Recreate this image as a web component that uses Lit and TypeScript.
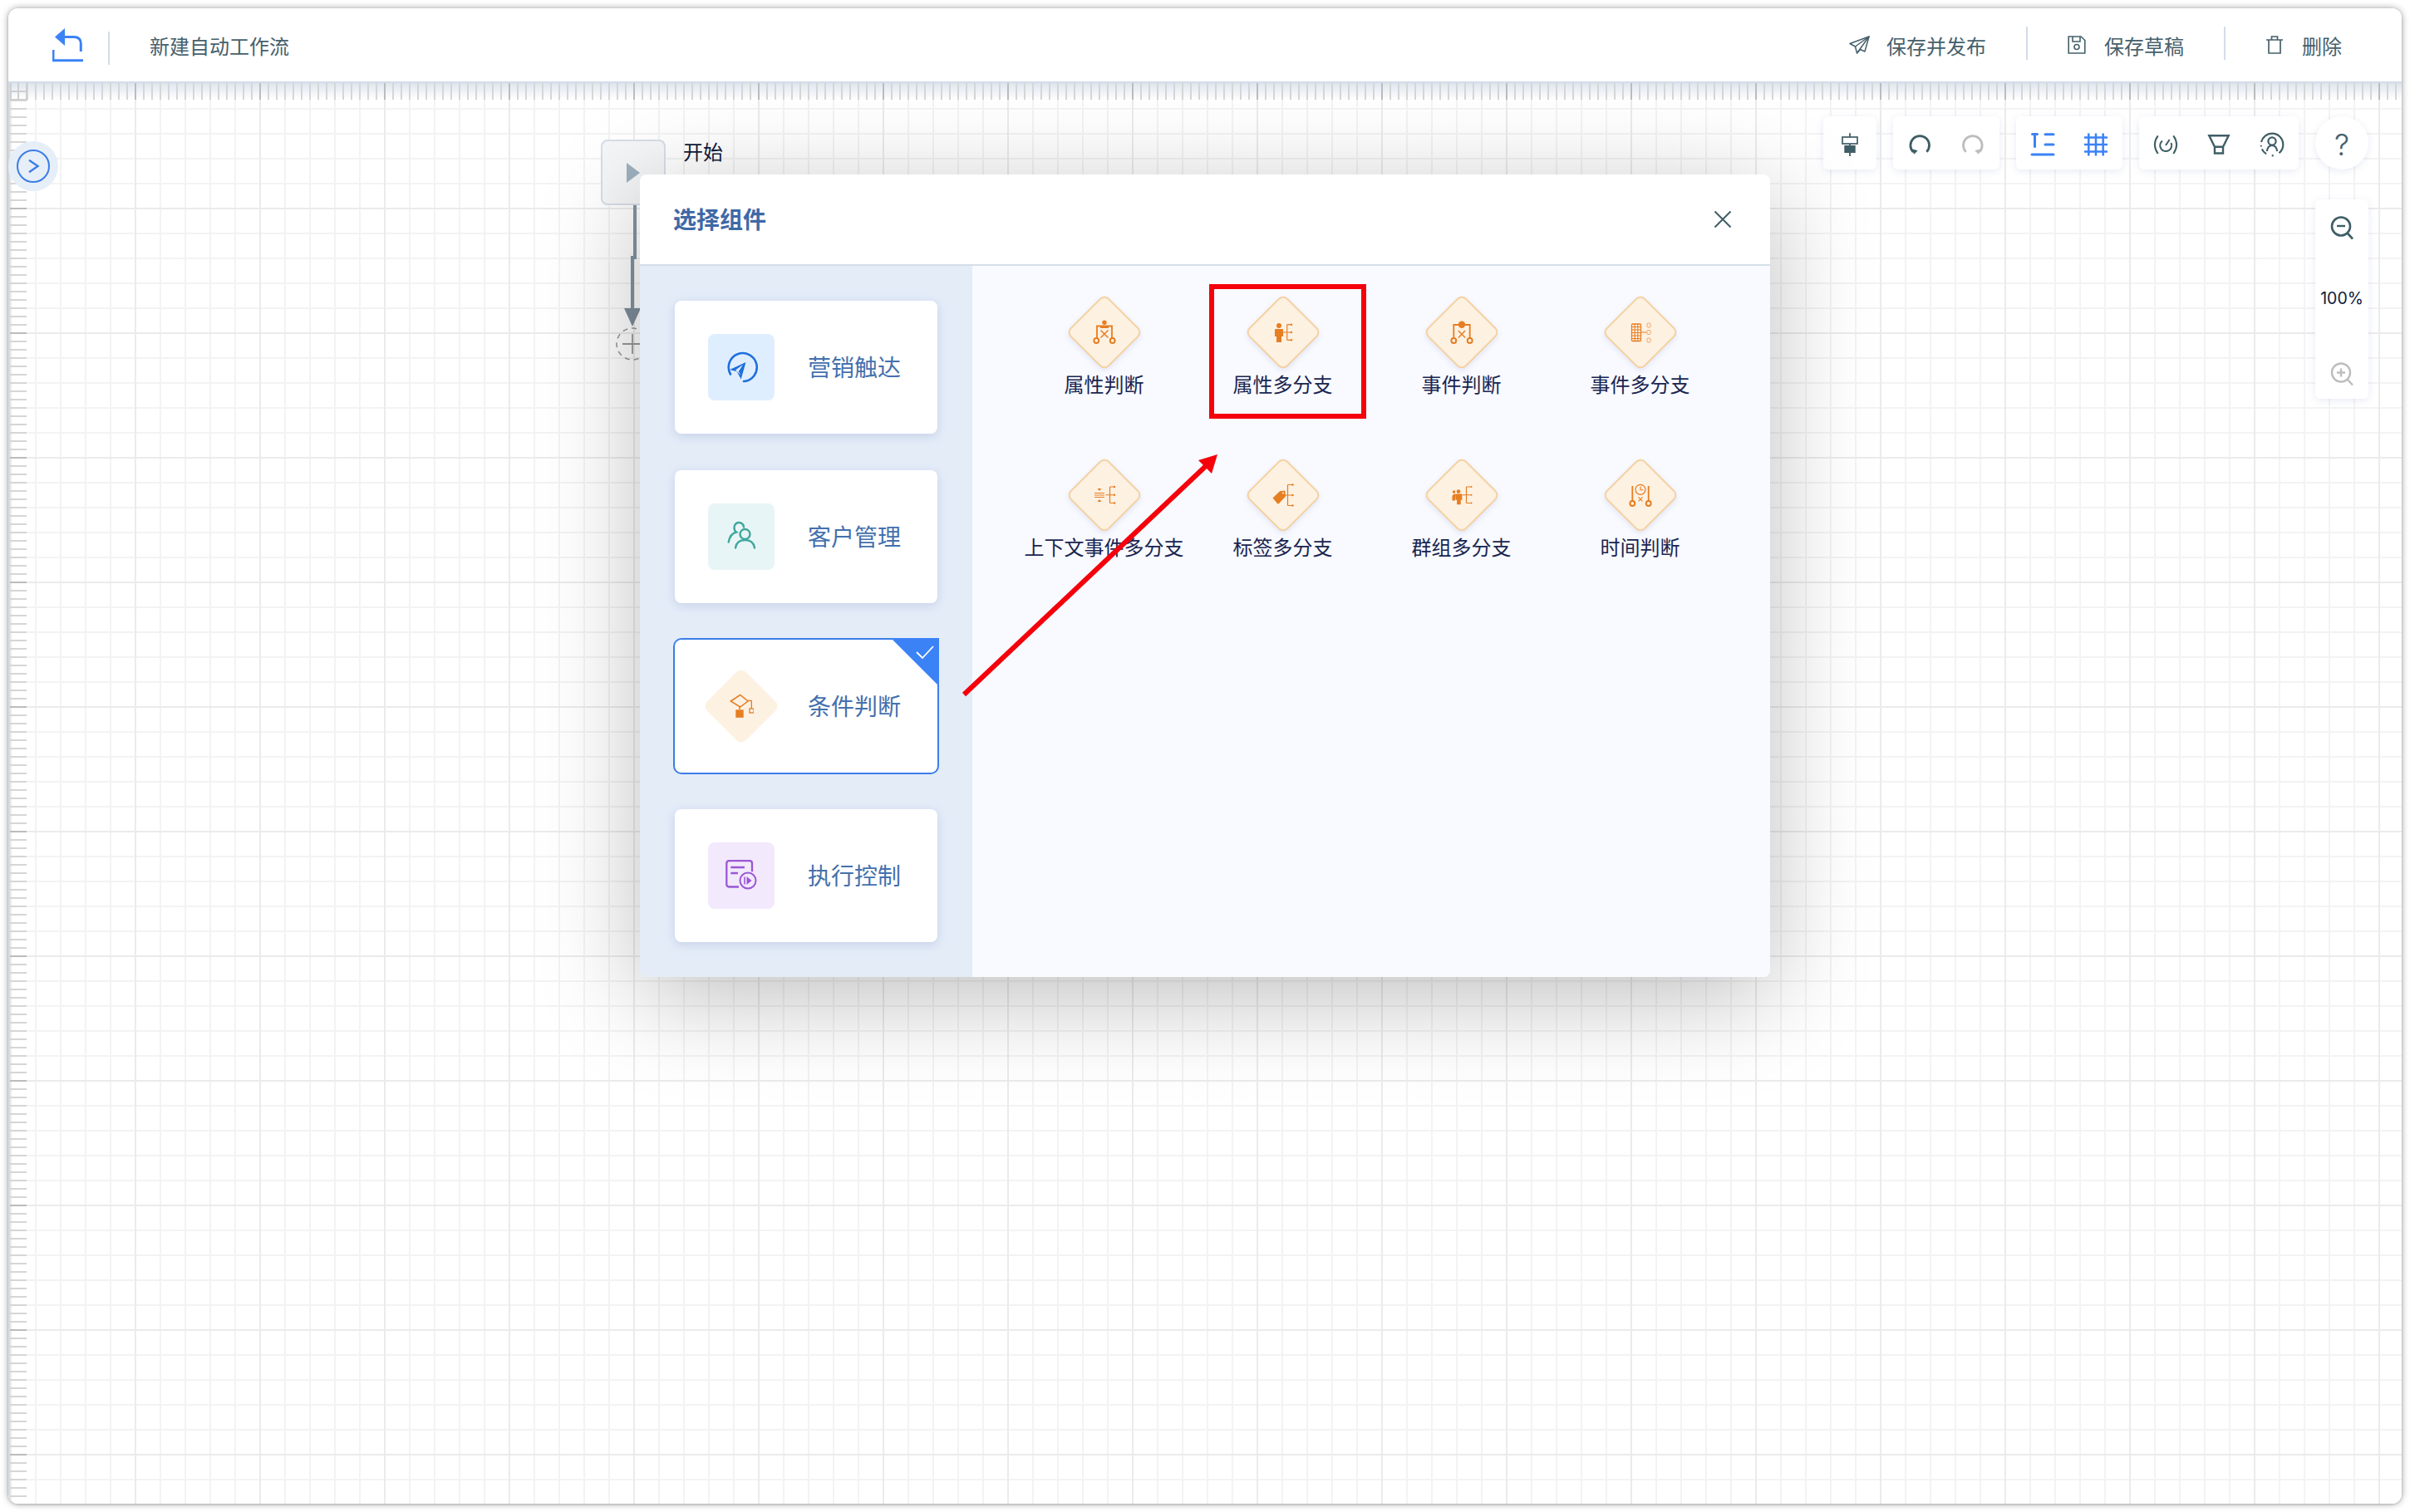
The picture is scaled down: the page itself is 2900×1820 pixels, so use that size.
import { LitElement, html, css, svg } from "lit";
import { customElement } from "lit/decorators.js";

const O = "#e67e22";
const G = "#3f5d66";

const tree = (x: number, y1: number, y2: number, ex: number, r = 1.2) => svg`
  <path d="M${x} ${y1}V${y2}M${x} ${y1}H${ex}M${x} ${(y1 + y2) / 2}H${ex}M${x} ${y2}H${ex}M${x - 5} ${(y1 + y2) / 2}H${x}" fill="none" stroke="${O}" stroke-width="1.200"/>
  <circle cx="${ex}" cy="${y1}" r="${r}" fill="${O}"/><circle cx="${ex}" cy="${(y1 + y2) / 2}" r="${r}" fill="${O}"/><circle cx="${ex}" cy="${y2}" r="${r}" fill="${O}"/>`;

const person = (cx: number, top: number, k = 1) => svg`
  <circle cx="${cx}" cy="${top + 3 * k}" r="${3 * k}" fill="${O}"/>
  <path d="M${cx - 5 * k} ${top + 8 * k}q0 -1 1 -1h${8 * k}q1 0 1 1v${8 * k}h${-2 * k}v${7 * k}h${-6 * k}v${-7 * k}h${-2 * k}z" fill="${O}"/>`;

const rings = svg`<circle cx="5.3" cy="25" r="2.9" fill="none" stroke="${O}" stroke-width="2"/><circle cx="24.7" cy="25" r="2.9" fill="none" stroke="${O}" stroke-width="2"/>`;

const ICONS: Record<string, any> = {
  attr: svg`<circle cx="15" cy="3.2" r="2.7" fill="${O}"/><rect x="10" y="6.5" width="10" height="3.5" fill="${O}"/>${rings}
    <path d="M6 22V7.500H10M24 22V7.500H20" fill="none" stroke="${O}" stroke-width="1.800"/><path d="M10.5 12.5l9 9M19.5 12.5l-9 9" stroke="${O}" stroke-width="1.5"/>`,
  attrM: svg`${person(10, 4)}${tree(19.7, 5.7, 24.3, 25)}`,
  evt: svg`<circle cx="15" cy="5.7" r="4.2" fill="${O}"/>${rings}
    <path d="M5.3 22V6H11M24.7 22V6H19" fill="none" stroke="${O}" stroke-width="1.8"/><path d="M10.8 13l8.4 8.4M19.2 13l-8.4 8.4" stroke="${O}" stroke-width="1.4"/>`,
  evtM: svg`<rect x="4.5" y="5" width="11" height="20.5" rx="1" fill="none" stroke="${O}" stroke-width="1.3"/>
    <path d="M5 8.5h10M5 12h10M5 15.5h10M5 19h10M5 22.5h10M8.2 5v20M11.8 5v20" stroke="${O}" stroke-width="1.1"/>
    <path d="M15.5 15h7" stroke="${O}" stroke-width="1.2"/>
    <rect x="23" y="4" width="4" height="5" rx="1" fill="none" stroke="#eda35f" stroke-width=".9"/><rect x="23" y="12.5" width="4" height="5" rx="1" fill="none" stroke="#eda35f" stroke-width=".9"/><rect x="23" y="22" width="4" height="5" rx="1" fill="none" stroke="#eda35f" stroke-width=".9"/>`,
  ctx: svg`<path d="M9 10l2.500-3h-5zM9 20l2.500 3h-5z" fill="${O}"/>
    <path d="M3 12.5h12M3 15h12M3 17.5h12" stroke="${O}" stroke-width="1.200"/>${tree(21.5, 5, 24.5, 27)}`,
  tag: svg`<path d="M2.5 18.5l8.5-8.3 6.3-.7.7 7-8 8.5q-1 1-2 0z" fill="${O}"/><circle cx="15" cy="12.5" r="1.1" fill="#fdf1e2"/>${tree(20.5, 2.5, 27.5, 26.5)}`,
  grp: svg`${person(11, 8.2, .78)}<path d="M5 14.5q0-1 1-1h1v8H3.5v-5q0-2 1.5-2z" fill="${O}"/><circle cx="5.6" cy="11" r="1.8" fill="${O}"/>${tree(20.5, 5, 24.5, 26.5, 1)}`,
  time: svg`<circle cx="15" cy="8.3" r="6" fill="none" stroke="${O}" stroke-width="1.2"/><path d="M15 4.5V8.8H18.6" fill="none" stroke="${O}" stroke-width="1.1"/>${rings}
    <path d="M5.3 22V4M24.7 22V4" stroke="${O}" stroke-width="1.8"/><path d="M12.5 17.3l5 5M17.5 17.3l-5 5" stroke="${O}" stroke-width="1.1"/>`,
};

const ITEMS = [
  ["属性判断", "attr"], ["属性多分支", "attrM"], ["事件判断", "evt"], ["事件多分支", "evtM"],
  ["上下文事件多分支", "ctx"], ["标签多分支", "tag"], ["群组多分支", "grp"], ["时间判断", "time"],
];

const CARD_ICONS = {
  send: svg`<path d="M7 28.5A17 17 0 1 1 23 37" fill="none" stroke="#1f6fdc" stroke-width="2.6" stroke-linecap="round"/>
    <path d="M25.5 14L6 23l8.7 2.2 5 9.3z" fill="#1f6fdc"/><path d="M13 23.5l9-6.5-5.2 8.2 2.6 4.3z" fill="#ddedff"/>`,
  users: svg`<circle cx="24.5" cy="17" r="6" fill="none" stroke="#3ea79b" stroke-width="2.4"/><path d="M13 33.5q1.5-9.5 11.5-9.5t11.5 9.5" fill="none" stroke="#3ea79b" stroke-width="2.4" stroke-linecap="round"/>
    <path d="M23 8.5A5.7 5.7 0 0 0 11.5 9q0 4 2.5 5.5-7.500 2-9.300 12" fill="none" stroke="#3ea79b" stroke-width="2.4" stroke-linecap="round"/>`,
  exec: svg`<path d="M17 33.500H5.300q-3 0-3-3V5.200q0-3 3-3H30q3 0 3 3v10" fill="none" stroke="#9a57d6" stroke-width="2.300"/>
    <path d="M7.300 10H24M7.300 17H16" stroke="#9a57d6" stroke-width="2.300"/><circle cx="28" cy="26" r="9.500" fill="#f2e9fc" stroke="#9a57d6" stroke-width="2"/>
    <path d="M24 21.500v9" stroke="#9a57d6" stroke-width="1.600"/><path d="M26.500 21l6 5-6 5z" fill="#9a57d6"/>`,
};

@customElement("app-root")
export class AppRoot extends LitElement {
  static styles = css`
    :host { display: block; width: 2900px; height: 1820px; padding: 10px; box-sizing: border-box; background: #fff;
      font-family: "Noto Sans CJK SC", "Noto Sans", sans-serif; }
    svg { display: block; flex: none; }
    .win { position: relative; width: 2880px; height: 1800px; background: #fff; border-radius: 12px; overflow: hidden; display: flex; flex-direction: column; }
    .shadow { border-radius: 12px; box-shadow: 0 0 8px rgba(0,0,0,.38), 0 1px 3px rgba(0,0,0,.15); }
    .head { height: 88px; flex: none; box-sizing: border-box; display: flex; align-items: center; padding: 0 72px 0 53px; color: #46606b; font-size: 24px; background: #fff; }
    .head .vl { width: 2px; height: 40px; background: #d3dde8; margin-top: 8px; }
    .head .title { margin-left: 48px; }
    .head .sp { flex: 1; }
    .act { display: flex; align-items: center; white-space: nowrap; gap: 22px; }
    .act.s { gap: 20px; }
    .back { margin-right: 29px; }
    .head .vl.a { margin: 0 48px 4px; }
    .canvas { position: relative; flex: 1; border-top: 2px solid #d3dde8; border-left: 2px solid #d3dde8; box-sizing: border-box;
      background-color: #fff;
      background-image:
        linear-gradient(to right, #ebebeb 2px, transparent 2px), linear-gradient(to bottom, #ebebeb 2px, transparent 2px),
        linear-gradient(to right, #f3f3f3 2px, transparent 2px), linear-gradient(to bottom, #f3f3f3 2px, transparent 2px);
      background-size: 150px 150px, 150px 150px, 30px 30px, 30px 30px;
    }
    .ruler-top { position: absolute; left: 0; top: 0; right: 0; height: 20px;
      background-image:
        repeating-linear-gradient(to right, #bcbcbc 0 2px, transparent 2px 150px),
        repeating-linear-gradient(to right, #d6d6d6 0 2px, transparent 2px 10px),
        linear-gradient(to bottom, #dfe5ef, #fff); }
    .ruler-left { position: absolute; left: 0; top: 0; bottom: 0; width: 20px;
      background-image:
        repeating-linear-gradient(to bottom, #bcbcbc 0 2px, transparent 2px 150px),
        repeating-linear-gradient(to bottom, #d6d6d6 0 2px, transparent 2px 10px); }
    .corner { position: absolute; left: 0; top: 0; width: 21px; height: 21px; box-sizing: border-box; background: #fff;
      border-right: 2px solid #cfcfcf; border-bottom: 2px solid #cfcfcf; border-left: 2px solid #cfcfcf;
      background-image: linear-gradient(#cfcfcf,#cfcfcf), linear-gradient(#cfcfcf,#cfcfcf), linear-gradient(to bottom, #dfe5ef, #fff);
      background-size: 2px 100%, 100% 2px, 100% 100%; background-position: 7px 0, 0 9px, 0 0; background-repeat: no-repeat; }
    .side { position: absolute; left: -2px; top: 70px; width: 60px; height: 60px; border-radius: 50%; background: #e6eef8; display: flex; align-items: center; justify-content: center; }
    .tools { position: absolute; right: 40px; top: 40px; display: flex; gap: 20px; align-items: flex-start; }
    .grp { height: 64px; background: #fff; border-radius: 6px; display: flex; box-shadow: 0 2px 10px rgba(120,130,190,.16); }
    .grp.round { border-radius: 50%; }
    .cell { width: 64px; height: 64px; box-sizing: border-box; padding-top: 4px; display: flex; align-items: center; justify-content: center; }
    .q { font-family: "Inter", sans-serif; font-weight: 300; font-size: 36px; color: #46606b; }
    .zoom { position: absolute; right: 40px; top: 140px; width: 64px; height: 240px; background: #fff; border-radius: 6px; box-shadow: 0 2px 10px rgba(120,130,190,.16);
      display: flex; flex-direction: column; align-items: center; box-sizing: border-box; padding-top: 18px; }
    .zoom .pct { font-family: "Inter", "Liberation Sans", sans-serif; font-size: 19.500px; color: #0e1a3c; margin: 51px 0 57px; line-height: 36px; }
    .node { position: absolute; left: 711px; top: 68px; width: 78px; height: 79px; box-sizing: border-box; background: #f5f6f8; border: 2px solid #d8dde8; border-radius: 8px; display: flex; align-items: center; padding-left: 29px; }
    .nlabel { position: absolute; left: 810px; top: 65px; font-size: 24px; line-height: 34px; color: #111a3a; white-space: nowrap; }
    .edge { position: absolute; left: 708px; top: 147px; }
    .dialog { position: absolute; left: 758px; top: 110px; width: 1360px; height: 966px; background: #fff; border-radius: 8px; box-shadow: 0 24px 120px rgba(0,0,0,.26); display: flex; flex-direction: column; }
    .dhead { height: 110px; flex: none; box-sizing: border-box; border-bottom: 2px solid #d5deea; display: flex; align-items: center; justify-content: space-between; padding: 0 46px 0 40px; }
    .dtitle { font-size: 28px; font-weight: 700; color: #3f69a6; margin-bottom: 2px; }
    .dbody { flex: 1; display: flex; min-height: 0; border-radius: 0 0 8px 8px; overflow: hidden; }
    .left { width: 400px; flex: none; background: #e4ecf8; box-sizing: border-box; padding: 42px 42px; display: flex; flex-direction: column; gap: 44px; }
    .card { position: relative; height: 160px; background: #fff; border-radius: 8px; box-shadow: 0 3px 12px rgba(90,120,175,.22); display: flex; align-items: center; padding-left: 40px; gap: 40px; color: #4470ad; font-size: 28px; }
    .card span { margin-bottom: 2px; }
    .card.sel { box-shadow: 0 0 0 2px #3b7ee8; }
    .ci { width: 80px; height: 80px; border-radius: 8px; display: flex; align-items: center; justify-content: center; flex: none; }
    .corner-sel { position: absolute; right: -2px; top: -2px; width: 58px; height: 58px; background: #3b82f6; clip-path: polygon(0 0, 100% 0, 100% 100%); }
    .corner-sel svg { margin: 8px 0 0 29px; }
    .dia { width: 66px; height: 66px; flex: none; box-sizing: border-box; transform: rotate(45deg); background: #fdf1e2; border-radius: 8px; display: flex; align-items: center; justify-content: center; }
    .dia svg { transform: rotate(-45deg); flex: none; }
    .dia.b { border: 2px solid #f5d2a4; box-shadow: 2px 2px 6px rgba(120,130,190,.16); }
    .right { flex: 1; background: #f8faff; box-sizing: border-box; padding: 37px 49px 0 51px; display: grid; grid-template-columns: repeat(4, 1fr); grid-auto-rows: 196px; position: relative; }
    .item { display: flex; flex-direction: column; align-items: center; }
    .dw { width: 86px; height: 86px; display: flex; align-items: center; justify-content: center; flex: none; }
    .lbl { font-size: 24px; line-height: 32px; margin-top: 3px; color: #1a2550; white-space: nowrap; }
    .redbox { position: absolute; left: 685px; top: 132px; width: 189px; height: 162px; box-sizing: border-box; border: 6px solid #f5000b; }
    .arrow { position: absolute; left: 380px; top: 320px; pointer-events: none; }
  `;

  render() {
    const undo = (c: string, flip = false) => html`<svg width="32" height="32" viewBox="0 0 32 32" fill="none" style=${flip ? "transform:scaleX(-1)" : ""}>
      <path d="M24.300 24.800A11.300 11.300 0 1 0 8.200 24.900" stroke="${c}" stroke-width="2.800" fill="none"/><path d="M6 21L13.700 23.300 9.300 27.700z" fill="${c}"/></svg>`;
    return html`
      <div class="shadow">
      <div class="win">
        <div class="head">
          <svg class="back" width="38" height="42" viewBox="0 0 38 42" fill="none">
            <path d="M1 27v12.800h36" stroke="#3b82f6" stroke-width="3"/><path d="M14 11.500h12q8.300 0 8.300 8V29" stroke="#3b82f6" stroke-width="3"/><path d="M15 1v21L3 11.500z" fill="#3b82f6"/>
          </svg>
          <div class="vl"></div>
          <div class="title">新建自动工作流</div>
          <div class="sp"></div>
          <div class="act s">
            <svg width="25" height="22" viewBox="0 0 25 22" fill="none" stroke="#46606b" stroke-width="1.500" stroke-linejoin="round"><path d="M24 1L1 9.500l6.500 3.500 2 8 4-4.500 5.500 2.500z"/><path d="M7.500 13L24 1 9.500 21"/></svg>
            <span>保存并发布</span>
          </div>
          <div class="vl a"></div>
          <div class="act">
            <svg width="22" height="22" viewBox="0 0 22 22" fill="none" stroke="#46606b" stroke-width="1.600"><path d="M1.200 1H16l4.800 4.500V21H1.200z"/><path d="M6 1v6h9V1"/><circle cx="11" cy="13.500" r="3"/></svg>
            <span>保存草稿</span>
          </div>
          <div class="vl a"></div>
          <div class="act">
            <svg width="22" height="22" viewBox="0 0 22 22" fill="none" stroke="#46606b" stroke-width="1.700"><path d="M1 5H21M4 5V21H18V5M7.500 5V1H14.500V5"/></svg>
            <span>删除</span>
          </div>
        </div>
        <div class="canvas">
          <div class="ruler-top"></div>
          <div class="ruler-left"></div>
          <div class="corner"></div>
          <div class="side">
            <svg width="42" height="42" viewBox="0 0 42 42" fill="none" stroke="#3b7ce8" stroke-width="2"><circle cx="21" cy="21" r="19"/><path d="M16 13.700L26.600 21 16 28.300" stroke-width="2.300"/></svg>
          </div>
          <div class="node"><svg width="16" height="24" viewBox="0 0 16 24"><path d="M0 0l16 12L0 24z" fill="#9fb0bf"/></svg></div>
          <div class="nlabel">开始</div>
          <svg class="edge" width="60" height="190" viewBox="0 0 60 190" fill="none">
            <path d="M44 0V63H41V125" stroke="#8494a3" stroke-width="4"/><path d="M31 124H51L41 146z" fill="#7f8e9d"/>
            <circle cx="41" cy="167" r="19" stroke="#999" stroke-width="1.600" stroke-dasharray="6 5"/><path d="M29 167H53M41 155V179" stroke="#9a9a9a" stroke-width="1.800"/>
          </svg>
          <div class="tools">
            <div class="grp"><div class="cell"><svg width="32" height="32" viewBox="0 0 32 32" fill="none"><path d="M16 2.300V30" stroke="${G}" stroke-width="1.800"/><rect x="7" y="7" width="18" height="8" fill="#fff" stroke="${G}" stroke-width="1.700"/><rect x="9.300" y="17" width="13.400" height="9" fill="${G}"/></svg></div></div>
            <div class="grp"><div class="cell">${undo(G)}</div><div class="cell">${undo("#bdbdbd", true)}</div></div>
            <div class="grp">
              <div class="cell"><svg width="32" height="32" viewBox="0 0 32 32" fill="none" stroke="#3b82f6" stroke-width="3" stroke-linecap="round"><path d="M6.500 3.500V18.500M3.500 3.500H9.500M19 3.700h10M19 16h10M3 28h26"/></svg></div>
              <div class="cell"><svg width="32" height="32" viewBox="0 0 32 32" fill="none" stroke="#3b82f6" stroke-width="2.500"><path d="M7.300 2.500V29.500M16 2.500V29.500M24.700 2.500V29.500M2 7.500H30M2 16H30M2 24.500H30"/></svg></div>
            </div>
            <div class="grp">
              <div class="cell"><svg width="32" height="32" viewBox="0 0 32 32" fill="none" stroke="${G}" stroke-width="2"><path d="M6.700 5.300Q-1 16 6.700 27M25.300 5.300Q33 16 25.300 27"/><path d="M12 11.500A7 7 0 1 0 22.500 14M16 17L20.700 10"/></svg></div>
              <div class="cell"><svg width="32" height="32" viewBox="0 0 32 32" fill="none" stroke="${G}" stroke-width="2.400"><path d="M4.300 5.300H27.700L21 18.700H11zM11 18.700V26.500H21V18.700"/></svg></div>
              <div class="cell"><svg width="32" height="32" viewBox="0 0 32 32" fill="none" stroke="${G}" stroke-width="2.200"><circle cx="16" cy="16" r="13.300" stroke-dasharray="11.600 7.400 2 7 8 3 1.500 4 39.100 0"/><circle cx="16" cy="12" r="4.600"/><path d="M9.700 24q1.300-7 6.300-7t6.300 7"/></svg></div>
            </div>
            <div class="grp round"><div class="cell q">?</div></div>
          </div>
          <div class="zoom">
            <svg width="32" height="32" viewBox="0 0 32 32" fill="none" stroke="${G}" stroke-width="2.600"><circle cx="15" cy="14.500" r="11"/><path d="M23 23l6 6.500"/><path d="M10 14h10" stroke-width="2.400"/></svg>
            <div class="pct">100%</div>
            <svg width="32" height="32" viewBox="0 0 32 32" fill="none" stroke="#bdbdbd" stroke-width="2.400"><circle cx="15" cy="14.500" r="11"/><path d="M23 23l6 6.500"/><path d="M10 14.500h10M15 9.500v10"/></svg>
          </div>
          <div class="dialog">
            <div class="dhead">
              <div class="dtitle">选择组件</div>
              <svg width="22" height="22" viewBox="0 0 22 22" stroke="${G}" stroke-width="2"><path d="M1.500 1.500l19 19M20.500 1.500l-19 19"/></svg>
            </div>
            <div class="dbody">
              <div class="left">
                <div class="card"><div class="ci" style="background:#dfeeff"><svg width="40" height="40" viewBox="0 0 40 40">${CARD_ICONS.send}</svg></div><span>营销触达</span></div>
                <div class="card"><div class="ci" style="background:#e8f5f6"><svg width="40" height="40" viewBox="0 0 40 40">${CARD_ICONS.users}</svg></div><span>客户管理</span></div>
                <div class="card sel">
                  <div class="ci"><div class="dia"><svg width="30" height="30" viewBox="0 0 30 30" fill="none">
                    <path d="M2.300 9L13.700 1.500 23 9 13.700 16z" stroke="${O}" stroke-width="1.500"/><path d="M23 8.300H27.300V18" stroke="${O}" stroke-width="1.300"/>
                    <rect x="8.300" y="19.300" width="9.400" height="9.500" fill="${O}"/><rect x="25" y="18" width="5" height="5" stroke="${O}" stroke-width="1.300"/><path d="M13 15v4" stroke="${O}" stroke-width="1.500"/>
                  </svg></div></div>
                  <span>条件判断</span>
                  <div class="corner-sel"><svg width="24" height="20" viewBox="0 0 24 20" fill="none" stroke="#fff" stroke-width="1.800"><path d="M2 9l7 7L22 2"/></svg></div>
                </div>
                <div class="card"><div class="ci" style="background:#f2e9fc"><svg width="40" height="40" viewBox="0 0 40 40">${CARD_ICONS.exec}</svg></div><span>执行控制</span></div>
              </div>
              <div class="right">
                ${ITEMS.map(([t, k]) => html`<div class="item">
                  <div class="dw"><div class="dia b"><svg width="30" height="30" viewBox="0 0 30 30">${ICONS[k]}</svg></div></div>
                  <div class="lbl">${t}</div>
                </div>`)}
              </div>
            </div>
            <div class="redbox"></div>
            <svg class="arrow" width="330" height="320" viewBox="1150 530 330 320" fill="none">
              <path d="M1160 836L1452 560" stroke="#f5000b" stroke-width="6"/><path d="M1465 547L1442 554 1458 570z" fill="#f5000b"/>
            </svg>
          </div>
        </div>
      </div>
      </div>
    `;
  }
}
